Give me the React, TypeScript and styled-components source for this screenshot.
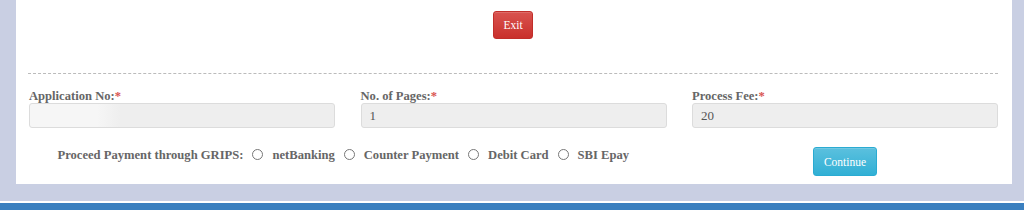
import styled, { createGlobalStyle } from "styled-components";

const GlobalStyle = createGlobalStyle`
  html, body {
    margin: 0;
    padding: 0;
    background: #c9cfe3;
  }
  * {
    box-sizing: border-box;
  }
`;

const fields = [
  { label: "Application No:", value: "", redacted: true },
  { label: "No. of Pages:", value: "1" },
  { label: "Process Fee:", value: "20" },
];

const paymentModes = ["netBanking", "Counter Payment", "Debit Card", "SBI Epay"];

const App = () => {
  return (
    <>
      <GlobalStyle />
      <StyledPage>
        <StyledPanel>
          <StyledTopRow>
            <StyledButton $variant="danger">Exit</StyledButton>
          </StyledTopRow>
          <StyledDivider />
          <StyledFieldGrid>
            {fields.map((field) => (
              <StyledField key={field.label}>
                <StyledLabel>
                  {field.label}
                  <StyledRequired>*</StyledRequired>
                </StyledLabel>
                <StyledInput
                  readOnly
                  value={field.value}
                  $redacted={field.redacted}
                />
              </StyledField>
            ))}
          </StyledFieldGrid>
          <StyledFooterRow>
            <StyledRadioGroup>
              <StyledRadioTitle>Proceed Payment through GRIPS:</StyledRadioTitle>
              {paymentModes.map((mode) => (
                <StyledRadioOption key={mode}>
                  <StyledRadio type="radio" name="grips" />
                  {mode}
                </StyledRadioOption>
              ))}
            </StyledRadioGroup>
            <StyledContinueCell>
              <StyledButton $variant="info">Continue</StyledButton>
            </StyledContinueCell>
          </StyledFooterRow>
        </StyledPanel>
        <StyledBottomBar />
      </StyledPage>
    </>
  );
};

export default App;

const StyledPage = styled.div`
  width: 1024px;
  height: 210px;
  display: flex;
  flex-direction: column;
  font-family: "Liberation Serif", "Times New Roman", serif;
`;

const StyledPanel = styled.div`
  margin-left: 16px;
  width: 996px;
  height: 184px;
  background: #fff;
  padding: 0 14px 0 12px;
`;

const StyledTopRow = styled.div`
  display: flex;
  justify-content: center;
  padding-top: 11px;
  height: 73px;
`;

const StyledButton = styled.button<{ $variant: "danger" | "info" }>`
  font-family: "Liberation Serif", "Times New Roman", serif;
  font-size: 11.5px;
  color: #fff;
  border-radius: 3px;
  cursor: pointer;
  height: ${({ $variant }) => ($variant === "danger" ? "28px" : "29px")};
  padding: ${({ $variant }) => ($variant === "danger" ? "0 9px" : "0 10px")};
  border: 1px solid
    ${({ $variant }) => ($variant === "danger" ? "#c12e2a" : "#2aabd2")};
  background: ${({ $variant }) =>
    $variant === "danger"
      ? "linear-gradient(to bottom, #d9534f 0%, #c9302c 100%)"
      : "linear-gradient(to bottom, #5bc0de 0%, #31b0d5 100%)"};
  box-shadow: inset 0 1px 0 rgba(255, 255, 255, 0.15);
`;

const StyledDivider = styled.div`
  border-top: 1px dashed #bbb;
`;

const StyledFieldGrid = styled.div`
  display: grid;
  grid-template-columns: repeat(3, 306px);
  column-gap: 25.5px;
  padding: 16px 0 0 1px;
`;

const StyledField = styled.div`
  display: flex;
  flex-direction: column;
`;

const StyledLabel = styled.label`
  font-size: 12.6px;
  font-weight: 700;
  color: #666;
  line-height: 13px;
`;

const StyledRequired = styled.span`
  color: #d9534f;
`;

const StyledInput = styled.input<{ $redacted?: boolean }>`
  height: 25px;
  width: 100%;
  border: 1px solid #dcdcdc;
  border-radius: 3px;
  padding: 0 8px;
  font-family: "Liberation Serif", "Times New Roman", serif;
  font-size: 13px;
  color: #555;
  outline: none;
  background: ${({ $redacted }) =>
    $redacted
      ? "linear-gradient(to right, #f6f6f6 0%, #f6f6f6 22%, #eeeeee 30%, #eeeeee 100%)"
      : "#eeeeee"};
`;

const StyledFooterRow = styled.div`
  display: grid;
  grid-template-columns: 637.5px 306px;
  column-gap: 25.5px;
  padding: 20px 0 0 1px;
  align-items: start;
`;

const StyledRadioGroup = styled.div`
  display: flex;
  align-items: center;
  justify-content: center;
  font-size: 12.6px;
  font-weight: 700;
  color: #666;
  padding-right: 4px;
`;

const StyledRadioTitle = styled.span`
  margin-right: 5px;
`;

const StyledRadioOption = styled.label`
  display: flex;
  align-items: center;
  margin-right: 5px;
`;

const StyledRadio = styled.input`
  appearance: none;
  width: 11px;
  height: 11px;
  margin: 0 9px 2px 4px;
  border: 1px solid #777;
  border-radius: 50%;
  background: #fff;
`;

const StyledContinueCell = styled.div`
  display: flex;
  justify-content: center;
  margin-top: -1px;
`;

const StyledBottomBar = styled.div`
  margin-top: 17px;
  border-top: 2px solid #fff;
  flex: 1;
  background: #3a7fbf;
`;
